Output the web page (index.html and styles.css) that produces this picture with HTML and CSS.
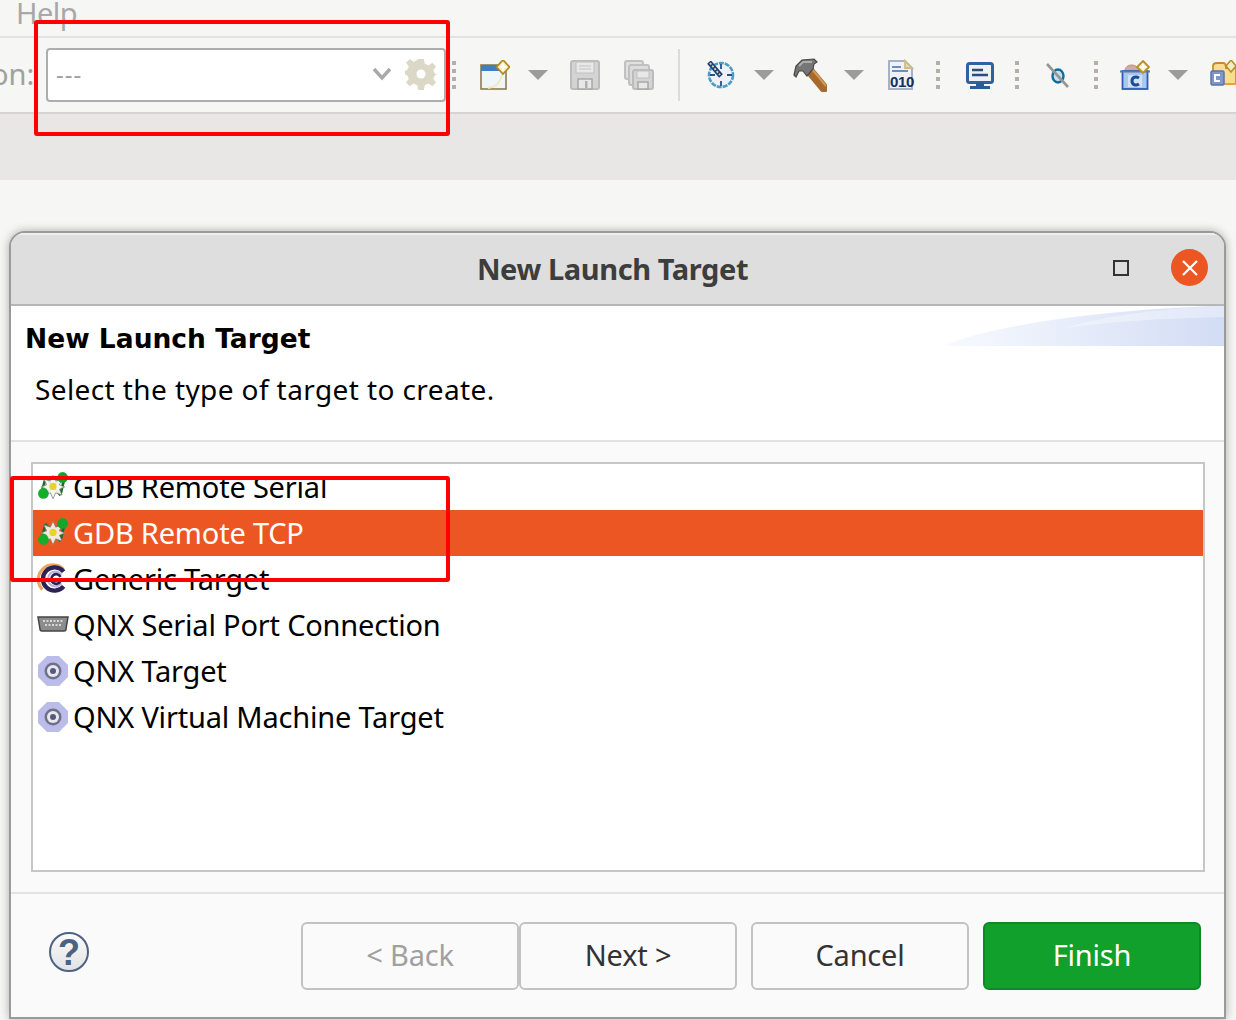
FILE: index.html
```html
<!DOCTYPE html>
<html lang="en">
<head>
<meta charset="utf-8">
<title>New Launch Target</title>
<link rel="stylesheet" href="styles.css">
</head>
<body>
<div class="menubar"><span class="menu-item">Help</span></div>
<div class="toolbar">
  <span class="run-label">on:</span>
  <div class="combo">
    <span class="combo-text">---</span>
    <svg class="combo-chevron" viewBox="0 0 20 14"><path d="M2 2l8 9 8-9" fill="none" stroke="#a8a8a8" stroke-width="3.4"/></svg>
    <svg class="combo-gear" viewBox="0 0 32 32"><path d="M13 0h6l1 5 4 2 4-3 4 4-3 4 2 4 5 1v0h-5l-2 4 3 4-4 4-4-3-4 2-1 5h-6l-1-5-4-2-4 3-4-4 3-4-2-4-5-1V13l5-1 2-4-3-4 4-4 4 3 4-2z" transform="translate(1 1) scale(.94)" fill="#dcd8c8"/><circle cx="16" cy="16" r="4.5" fill="#fff"/></svg>
  </div>
  <i class="grip g-first"></i>
  <svg class="ico new-ico" viewBox="0 0 30 30"><rect x="1" y="5" width="25" height="24" fill="#eef6fc" stroke="#8c7c50" stroke-width="1.6"/><rect x="1" y="5" width="25" height="6" fill="#3f7fc0"/><path d="M8 28c8-1 13-6 14-14" fill="none" stroke="#f4e8b4" stroke-width="2"/><path d="M23 0l6.500 7-6.500 7-6.500-7z" fill="#f6efc8" stroke="#b08a20" stroke-width="1.800"/><path d="M23 3.500v7M19.500 7h7" stroke="#fff" stroke-width="1.600"/></svg>
  <i class="caret c-new"></i>
  <svg class="ico save-ico" viewBox="0 0 30 30"><rect x="1" y="1" width="28" height="28" rx="2" fill="#d4d4d4" stroke="#bcbcbc" stroke-width="2"/><rect x="6" y="2" width="18" height="11" fill="#e8e8e8" stroke="#c0c0c0"/><path d="M9 6h12M9 9h12" stroke="#c4c4c4"/><rect x="8" y="19" width="14" height="10" fill="#e8e8e8" stroke="#a8a8a8" stroke-width="1.5"/><rect x="15" y="21" width="2.500" height="7" fill="#b0b0b0"/></svg>
  <svg class="ico saveall-ico" viewBox="0 0 30 30"><rect x="1" y="1" width="18" height="18" rx="2" fill="#e0e0e0" stroke="#c0c0c0" stroke-width="2"/><rect x="5" y="5" width="20" height="20" rx="2" fill="#dcdcdc" stroke="#c0c0c0" stroke-width="2"/><rect x="9" y="10" width="20" height="19" rx="2" fill="#d4d4d4" stroke="#bcbcbc" stroke-width="2"/><rect x="13" y="11" width="12" height="7" fill="#e8e8e8" stroke="#c0c0c0"/><rect x="14" y="22" width="10" height="7" fill="#e8e8e8" stroke="#a8a8a8" stroke-width="1.5"/></svg>
  <i class="sep"></i>
  <svg class="ico clock-ico" viewBox="0 0 28 28"><circle cx="14" cy="14" r="12" fill="#eef2f6" stroke="#4f9cc0" stroke-width="2.600" stroke-dasharray="5 1"/><path d="M14 3v5M14 20v5M3 14h5M20 14h5" stroke="#27508c" stroke-width="1.800"/><path d="M2 1l12 14" stroke="#1f3f78" stroke-width="5"/><path d="M3 2l10 12" stroke="#d8d8a0" stroke-width="1.800" stroke-dasharray="2 1.500"/></svg>
  <i class="caret c-clock"></i>
  <svg class="ico hammer-ico" viewBox="0 0 34 34"><path d="M16 12l15 18" stroke="#a86a2c" stroke-width="9" stroke-linecap="round"/><path d="M19 11l14 17" stroke="#d09a58" stroke-width="2"/><path d="M1 17L3 8 9 2 21 1l3 3-3 2-1 5-6 7-4-5-4 0-3 6z" fill="#767676" stroke="#484848" stroke-width="1.200"/><path d="M6 8l4-4h9" fill="none" stroke="#acacac" stroke-width="2"/></svg>
  <i class="caret c-hammer"></i>
  <svg class="ico bin-ico" viewBox="0 0 27 30"><path d="M1 1h16l7 7v21H1z" fill="#eef1f6" stroke="#a8b0c4" stroke-width="2"/><path d="M17 1v7h7z" fill="#e8ddb4" stroke="#cdbd88" stroke-width="1.800"/><path d="M4 7h9M4 11h16" stroke="#6f8cc0" stroke-width="2"/><text class="bin-text" x="14" y="27">010</text></svg>
  <i class="grip g-bin"></i>
  <svg class="ico monitor-ico" viewBox="0 0 28 27"><rect x="1.500" y="1.500" width="25" height="19" rx="2" fill="#edf1f6" stroke="#2f639f" stroke-width="3"/><path d="M6 8h11M6 13h16" stroke="#2a4a82" stroke-width="2.400"/><path d="M10 21h8v3H10zM4 24h20v3H4z" fill="#2a5c98"/></svg>
  <i class="grip g-mon"></i>
  <svg class="ico lens-ico" viewBox="0 0 26 28"><ellipse cx="13" cy="15" rx="5.500" ry="6.500" fill="#c8e0ec" stroke="#0f6d9c" stroke-width="2.400"/><path d="M2 3l21 23" stroke="#969696" stroke-width="2.600"/></svg>
  <i class="grip g-lens"></i>
  <svg class="ico class-ico" viewBox="0 0 30 30"><path d="M5 11c0-8 13-8 14 0z" fill="#d4a89c" stroke="#b89080"/><rect x="2.500" y="11" width="25" height="18" fill="#a8c8f0" stroke="#3058b8" stroke-width="1.800"/><path d="M0 11.500h30" stroke="#5878a8" stroke-width="2"/><rect x="8" y="15" width="14" height="12" fill="#d4e2f6"/><path d="M19 18c-3-2-7-1-7 3s4 5 7 3" fill="none" stroke="#204c94" stroke-width="3"/><path d="M23 1l6 6-6 6-6-6z" fill="#f4ecc4" stroke="#b89028" stroke-width="1.800"/><path d="M23 4v6M20 7h6" stroke="#fff" stroke-width="1.400"/></svg>
  <i class="caret c-class"></i>
  <svg class="ico folder-ico" viewBox="0 0 26 30"><path d="M3 11V6c0-2 2-3 4-3h6c2 0 3 2 3 5h10v16H3z" fill="#f8dc90" stroke="#c48a3c" stroke-width="1.800"/><path d="M8 24h18" stroke="#e8a040" stroke-width="2"/><rect x="1" y="11" width="13" height="14" rx="1.500" fill="#7e98cc" stroke="#5a74a8" stroke-width="1.500"/><path d="M10 15H5v6h5" fill="none" stroke="#fff" stroke-width="2"/><path d="M21 0l5 6-5 6-5-6z" fill="#f4ecc4" stroke="#b89028" stroke-width="1.600"/></svg>
</div>
<div class="band"></div>
<main class="dialog">
  <header class="titlebar">
    <h1 class="title">New Launch Target</h1>
    <span class="win-max"></span>
    <span class="win-close"><svg viewBox="0 0 18 18"><path d="M2 2l14 14M16 2L2 16" stroke="#fff" stroke-width="2.200"/></svg></span>
  </header>
  <section class="banner">
    <svg class="banner-art" viewBox="0 0 280 40" preserveAspectRatio="none">
      <defs><linearGradient id="wave" x1="0" x2="1" y1="0" y2="0"><stop offset="0" stop-color="#f8fafe"/><stop offset="1" stop-color="#d2dcf4"/></linearGradient></defs>
      <path d="M0 40C40 20 170 2 280 0V40z" fill="url(#wave)"/>
      <path d="M120 22C170 15 230 12 280 11V0C220 2 170 8 120 22z" fill="#fff" opacity=".35"/>
    </svg>
    <h2 class="banner-title">New Launch Target</h2>
    <p class="banner-desc">Select the type of target to create.</p>
  </section>
  <section class="body">
    <ul class="list">
      <li class="row">
        <svg class="row-ico" viewBox="0 0 30 30"><use href="#gdb"/></svg>
        <span>GDB Remote Serial</span>
      </li>
      <li class="row selected">
        <svg class="row-ico" viewBox="0 0 30 30">
          <g id="gdb">
            <path d="M4 22L8 7M26 5L22 22" fill="none" stroke="#1c6e24" stroke-width="2.600"/>
            <path d="M8 6l14 17M22 6L8 23" stroke="#2e7a34" stroke-width="2"/>
            <path d="M15 4l2.500 5.500 6-2-2.500 5.500 5 2-5 2 2.500 5.500-6-2-2.500 5.500-2.500-5.500-6 2 2.500-5.500-5-2 5-2-2.500-5.500 6 2z" fill="#f6f6ee" fill-opacity=".92" stroke="#808080" stroke-width=".7"/>
            <circle cx="15" cy="14.500" r="3.400" fill="#e8d428"/>
            <circle cx="6" cy="21" r="5" fill="#14ae2a"/>
            <circle cx="24" cy="6" r="5" fill="#14a62a"/>
          </g>
        </svg>
        <span>GDB Remote TCP</span>
      </li>
      <li class="row">
        <svg class="row-ico" viewBox="0 0 30 30">
          <path d="M25 6A13.500 13.500 0 0 0 5 25" fill="none" stroke="#eaa860" stroke-width="3"/>
          <path d="M25 8A11 11 0 1 0 25 22" fill="none" stroke="#2c2255" stroke-width="4"/>
          <path d="M23 11A7 7 0 1 0 23 19" fill="none" stroke="#b8b4d8" stroke-width="2"/>
          <path d="M22 13A4.500 4.500 0 1 0 22 17" fill="none" stroke="#2c2255" stroke-width="2.500"/>
          <path d="M19 15h10" stroke="#a8a8c8" stroke-width="1.500"/>
        </svg>
        <span>Generic Target</span>
      </li>
      <li class="row">
        <svg class="row-ico" viewBox="0 0 32 30"><path d="M1 7h30l-2 12c0 1-1 2-2 2H5c-1 0-2-1-2-2z" fill="#8c8c8c" stroke="#444" stroke-width="1.500"/><path d="M6 11h20M8 15h16" stroke="#d8d8d8" stroke-width="2" stroke-dasharray="2 1.500"/></svg>
        <span>QNX Serial Port Connection</span>
      </li>
      <li class="row">
        <svg class="row-ico" viewBox="0 0 32 32"><use href="#qnx"/></svg>
        <span>QNX Target</span>
      </li>
      <li class="row">
        <svg class="row-ico" viewBox="0 0 32 32">
          <g id="qnx">
            <path d="M10 1h12l9 9v12l-9 9H10l-9-9V10z" fill="#bcbce8"/>
            <circle cx="16" cy="16" r="8.500" fill="#70708c"/>
            <circle cx="16" cy="16" r="6" fill="#e8e8f0"/>
            <circle cx="16" cy="16" r="3" fill="#58587c"/>
          </g>
        </svg>
        <span>QNX Virtual Machine Target</span>
      </li>
    </ul>
  </section>
  <footer class="footer">
    <svg class="help" viewBox="0 0 40 40">
      <defs><linearGradient id="helpfill" x1="0" x2="0" y1="0" y2="1"><stop offset="0" stop-color="#fbfbfb"/><stop offset="1" stop-color="#e2e2e2"/></linearGradient></defs>
      <circle cx="20" cy="20" r="19" fill="url(#helpfill)" stroke="#4b6285" stroke-width="2"/>
      <text class="help-mark" x="20" y="33">?</text>
    </svg>
    <div class="buttons">
      <button class="btn disabled" type="button">&lt; Back</button>
      <button class="btn btn-next" type="button">Next &gt;</button>
      <button class="btn btn-cancel" type="button">Cancel</button>
      <button class="btn primary" type="button">Finish</button>
    </div>
  </footer>
</main>
<div class="mark mark-combo"></div>
<div class="mark mark-row"></div>
</body>
</html>
```
FILE: styles.css
```css
* { box-sizing: border-box; }
html, body { margin: 0; padding: 0; }
body {
  position: relative;
  width: 1236px;
  height: 1020px;
  overflow: hidden;
  background: #f6f6f5;
  font-family: "Noto Sans", "Open Sans", sans-serif;
  color: #000;
}
.menubar { height: 36px; overflow: hidden; }
.menu-item { display: block; margin-left: 16px; margin-top: -7px; font-size: 29px; line-height: 40px; letter-spacing: -.5px; color: #a8a8a8; }
.toolbar {
  height: 78px;
  display: flex;
  align-items: center;
  border-top: 2px solid #e4e3e1;
  border-bottom: 2px solid #d8d3ce;
  background: #f6f6f5;
  overflow: hidden;
}
.run-label { flex: none; width: 55px; margin-left: -9px; padding-bottom: 4px; font-size: 29px; color: #a0a0a0; }
.combo {
  flex: none;
  width: 400px;
  height: 54px;
  display: flex;
  align-items: center;
  background: #fff;
  border: 2px solid #adadad;
  border-radius: 4px;
  padding-left: 8px;
}
.combo-text { flex: 1; padding-bottom: 4px; font-size: 24px; letter-spacing: 1px; color: #a0a0a0; }
.combo-chevron { width: 20px; height: 14px; margin-right: 13px; margin-bottom: 2px; }
.combo-gear { width: 32px; height: 32px; margin-right: 7px; margin-bottom: 2px; }
.ico { flex: none; display: block; }
.grip { flex: none; display: block; width: 4px; height: 28px; background: repeating-linear-gradient(#b4b0a4 0 4px, transparent 4px 8px); }
.caret { flex: none; display: block; width: 0; height: 0; border-left: 10px solid transparent; border-right: 10px solid transparent; border-top: 10px solid #9c9c9c; }
.sep { flex: none; display: block; width: 2px; height: 52px; background: #dcdcdc; margin-left: 24px; }
.g-first { margin-left: 6px; }
.new-ico { width: 30px; height: 30px; margin-left: 24px; }
.c-new { margin-left: 18px; }
.save-ico { width: 30px; height: 30px; margin-left: 22px; }
.saveall-ico { width: 30px; height: 30px; margin-left: 24px; }
.clock-ico { width: 28px; height: 28px; margin-left: 27px; }
.c-clock { margin-left: 19px; }
.hammer-ico { width: 34px; height: 34px; margin-left: 19px; }
.c-hammer { margin-left: 17px; }
.bin-ico { width: 27px; height: 30px; margin-left: 24px; overflow: visible; }
.bin-text { font-family: "Liberation Sans", sans-serif; font-size: 15px; font-weight: 700; letter-spacing: -.4px; fill: #14305f; text-anchor: middle; }
.g-bin { margin-left: 21px; }
.monitor-ico { width: 28px; height: 27px; margin-left: 26px; }
.g-mon { margin-left: 21px; }
.lens-ico { width: 26px; height: 28px; margin-left: 26px; }
.g-lens { margin-left: 23px; }
.class-ico { width: 30px; height: 30px; margin-left: 22px; }
.c-class { margin-left: 18px; }
.folder-ico { width: 26px; height: 30px; margin-left: 22px; }
.band { height: 66px; background: #e8e7e5; }
.dialog {
  width: 1217px;
  height: 788px;
  margin-top: 51px;
  margin-left: 9px;
  display: flex;
  flex-direction: column;
  background: #fafafa;
  border: 2px solid #9a9a9a;
  border-radius: 16px 16px 0 0;
  box-shadow: 0 0 10px rgba(0,0,0,.3);
  overflow: hidden;
}
.titlebar {
  flex: none;
  height: 73px;
  position: relative;
  display: flex;
  align-items: center;
  justify-content: center;
  background: #dedede;
  border-bottom: 2px solid #b6b6b6;
  box-shadow: inset 0 2px 0 #f0f0f0;
}
.title { margin: 0 10px 0 0; font-size: 29px; font-weight: 700; letter-spacing: -.4px; color: #3d3d3d; }
.win-max { position: absolute; left: 1102px; top: 27px; width: 16px; height: 16px; border: 2px solid #333; }
.win-close { position: absolute; left: 1160px; top: 16px; width: 37px; height: 37px; border-radius: 50%; background: #ec5622; display: flex; align-items: center; justify-content: center; }
.win-close svg { width: 18px; height: 18px; }
.banner { flex: none; height: 136px; position: relative; background: #fff; border-bottom: 2px solid #e2e2e2; padding: 15px 0 0 14px; }
.banner-art { position: absolute; right: 0; top: 0; width: 280px; height: 40px; }
.banner-title { position: relative; margin: 0; font-family: "DejaVu Sans", sans-serif; font-size: 26.5px; font-weight: 700; line-height: 36px; }
.banner-desc { margin: 13px 0 0 10px; font-size: 28px; line-height: 38px; letter-spacing: .4px; }
.body { flex: none; height: 452px; padding: 20px 19px 0 20px; border-bottom: 2px solid #e2e2e2; }
.list { margin: 0; padding: 0; list-style: none; height: 410px; overflow: hidden; background: #fff; border: 2px solid #c6c6c6; }
.row { height: 46px; display: flex; align-items: center; gap: 4px; padding-left: 4px; font-size: 29px; letter-spacing: -.2px; color: #000; }
.row span { padding-bottom: 2px; }
.row.selected { background: #ec5622; color: #fff; }
.row-ico { flex: none; width: 32px; height: 32px; }
.footer { flex: 1; display: flex; align-items: flex-start; padding: 38px 0 0 38px; }
.help { flex: none; width: 40px; height: 40px; }
.help-mark { font-family: "Liberation Sans", sans-serif; font-size: 36px; font-weight: 700; fill: #4b6285; text-anchor: middle; }
.buttons { display: flex; margin-left: 212px; margin-top: -10px; }
.btn { width: 218px; height: 68px; font-family: inherit; font-size: 29px; letter-spacing: -.2px; color: #333; background: #fafafa; border: 2px solid #c2c2c2; border-radius: 6px; padding: 0 0 4px; }
.btn.disabled { color: #a0a0a0; }
.btn-cancel, .primary { margin-left: 14px; }
.btn.primary { background: #12a02c; border-color: #0e8a24; color: #fff; }
.mark { position: absolute; border: 4px solid #f00; border-radius: 3px; }
.mark-combo { left: 34px; top: 20px; width: 416px; height: 116px; }
.mark-row { left: 10px; top: 476px; width: 440px; height: 106px; }
```
